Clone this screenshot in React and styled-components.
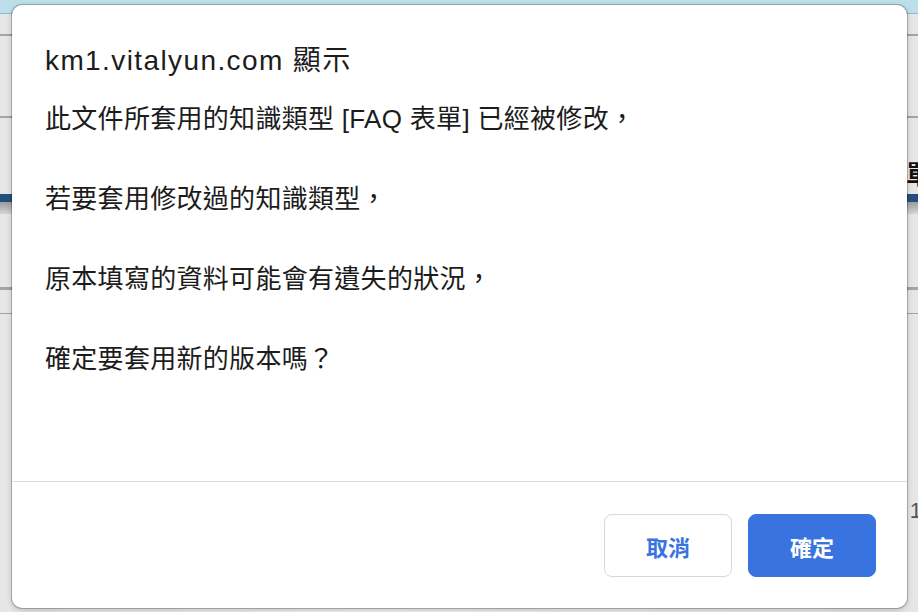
import React from 'react';
import styled, { createGlobalStyle } from 'styled-components';

const GlobalStyle = createGlobalStyle`
    html, body {
        margin: 0;
        padding: 0;
    }

    body {
        font-family: "Helvetica Neue", "Liberation Sans", "Noto Sans CJK TC", sans-serif;
        background: #ececec;
    }
`;

const Page = styled.div`
    position: relative;
    width: 918px;
    height: 612px;
    overflow: hidden;
    background: linear-gradient(90deg, #e6e6e6, #f1f1f1 40%, #e6e6e6);
`;

const TopStrip = styled.div`
    height: 13px;
    background: #bcdfe9;
    border-bottom: 1px solid #8dbdca;
`;

const Row = styled.div`
    display: flex;
    justify-content: flex-end;
    align-items: flex-end;
    height: ${p => p.h}px;
    border-bottom: ${p => (p.line ? `${p.line}px solid #a4a4a4` : 'none')};
    box-sizing: border-box;
`;

const Heading = styled.span`
    font-family: "Noto Sans CJK TC", sans-serif;
    font-weight: 700;
    font-size: 26px;
    line-height: 30px;
    color: #111;
    margin-right: -14px;
    margin-bottom: 6px;
`;

const NavBar = styled.div`
    height: 8px;
    background: #234f7f;
`;

const NavShade = styled.div`
    height: 12px;
    background: linear-gradient(#9c9c9c, #d6d6d6);
`;

const PageNumber = styled.span`
    font-family: "Liberation Sans", sans-serif;
    font-size: 22px;
    color: #555;
    margin-right: -4px;
`;

const Dialog = styled.div`
    position: absolute;
    left: 12px;
    top: 5px;
    width: 895px;
    height: 603px;
    display: flex;
    flex-direction: column;
    background: #fff;
    border-radius: 10px;
    box-shadow: 0 0 0 1px rgba(0, 0, 0, 0.22), 0 2px 6px rgba(0, 0, 0, 0.2);
    color: #1c1c1c;
`;

const Body = styled.div`
    flex: 1;
    padding: 40px 33px 0;
`;

const Title = styled.div`
    font-size: 28px;
    line-height: 32px;
    letter-spacing: 1.4px;
`;

const Message = styled.div`
    margin-top: 22px;
    font-size: 26px;
    line-height: 40px;
    letter-spacing: 0.3px;
    white-space: pre-line;
`;

const Footer = styled.div`
    display: flex;
    justify-content: flex-end;
    gap: 16px;
    padding: 32px 31px 31px;
    border-top: 1px solid #dcdcdc;
`;

const Button = styled.button`
    width: 128px;
    height: 63px;
    border-radius: 8px;
    font-family: "Noto Sans CJK TC", sans-serif;
    font-size: 22px;
    font-weight: 700;
    cursor: pointer;
    border: 1px solid ${p => (p.primary ? '#3873e0' : '#d8d8d8')};
    background: ${p => (p.primary ? '#3873e0' : '#fff')};
    color: ${p => (p.primary ? '#fff' : '#3873e0')};
`;

const message = [
    '此文件所套用的知識類型 [FAQ 表單] 已經被修改，',
    '若要套用修改過的知識類型，',
    '原本填寫的資料可能會有遺失的狀況，',
    '確定要套用新的版本嗎？'
].join('\n\n');

const App = () => {
    return (
        <Page>
            <GlobalStyle />
            <TopStrip />
            <Row h={22} line={2} />
            <Row h={82} line={2} />
            <Row h={76}>
                <Heading>表單</Heading>
            </Row>
            <NavBar />
            <NavShade />
            <Row h={76} line={3} />
            <Row h={24} line={1} />
            <Row h={210}>
                <PageNumber>1</PageNumber>
            </Row>

            <Dialog role="alertdialog">
                <Body>
                    <Title>km1.vitalyun.com 顯示</Title>
                    <Message>{message}</Message>
                </Body>
                <Footer>
                    <Button>取消</Button>
                    <Button primary>確定</Button>
                </Footer>
            </Dialog>
        </Page>
    );
};

export default App;
